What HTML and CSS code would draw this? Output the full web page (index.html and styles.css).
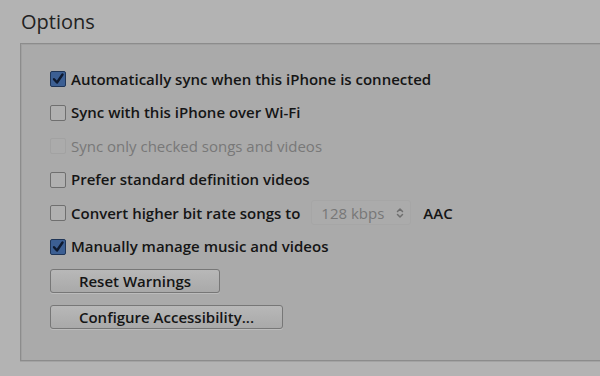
FILE: index.html
```html
<!DOCTYPE html>
<html>
<head>
<meta charset="utf-8">
<link rel="stylesheet" href="styles.css">
</head>
<body>
<div class="page">
  <h1 class="title">Options</h1>
  <div class="box">
    <div class="row">
      <span class="cb checked"><svg viewBox="0 0 14 14"><path d="M3 7.2 L6 10.5 L11.5 2.5" /></svg></span>
      <span class="label">Automatically sync when this iPhone is connected</span>
    </div>
    <div class="row">
      <span class="cb"></span>
      <span class="label">Sync with this iPhone over Wi-Fi</span>
    </div>
    <div class="row disabled">
      <span class="cb"></span>
      <span class="label">Sync only checked songs and videos</span>
    </div>
    <div class="row">
      <span class="cb"></span>
      <span class="label">Prefer standard definition videos</span>
    </div>
    <div class="row">
      <span class="cb"></span>
      <span class="label">Convert higher bit rate songs to</span>
      <span class="popup"><span class="popup-text">128 kbps</span><svg class="chev" viewBox="0 0 8 12"><path d="M1.5 4.5 L4 2 L6.5 4.5 M1.5 7.5 L4 10 L6.5 7.5" /></svg></span>
      <span class="label">AAC</span>
    </div>
    <div class="row">
      <span class="cb checked"><svg viewBox="0 0 14 14"><path d="M3 7.2 L6 10.5 L11.5 2.5" /></svg></span>
      <span class="label">Manually manage music and videos</span>
    </div>
    <div class="buttons">
      <button class="btn btn-reset">Reset Warnings</button>
      <button class="btn btn-config">Configure Accessibility...</button>
    </div>
  </div>
</div>
</body>
</html>
```
FILE: styles.css
```css
html, body {
  margin: 0;
  padding: 0;
  background: #b3b3b3;
  width: 600px;
  height: 376px;
  overflow: hidden;
}
.page {
  padding: 9px 0 0 20px;
  font-family: "Open Sans", "DejaVu Sans", sans-serif;
  color: #151515;
}
.title {
  margin: 0 0 0 1px;
  font-size: 20px;
  font-weight: 400;
  line-height: 26px;
  height: 34px;
  color: #222;
}
.box {
  background: #aaaaaa;
  border-top: 1px solid #8c8c8c;
  border-left: 1px solid #8c8c8c;
  border-bottom: 1px solid #8c8c8c;
  box-shadow: inset 1px 1px 0 #a0a0a0, 0 1px 0 #a3a3a3;
  height: 318px;
  padding: 18px 0 0 29px;
  box-sizing: border-box;
}
.row {
  display: flex;
  align-items: center;
  height: 33.5px;
  font-size: 15px;
  font-weight: 600;
}
.row.disabled {
  color: #787878;
  font-weight: 500;
}
.cb {
  width: 14px;
  height: 14px;
  border: 1px solid #6f6f6f;
  border-radius: 2px;
  background: #b0b0b0;
  margin-right: 5px;
  display: flex;
  flex: none;
  margin-top: 1px;
}
.row.disabled .cb {
  border-color: #a2a2a2;
  background: #ababab;
}
.cb.checked {
  background: #3c5f93;
  border-color: #1f3557;
}
.cb svg {
  width: 14px;
  height: 14px;
}
.cb svg path {
  fill: none;
  stroke: #0e1a30;
  stroke-width: 2.4;
  stroke-linecap: round;
  stroke-linejoin: round;
}
.popup {
  display: flex;
  align-items: center;
  margin: 0 12px 0 11px;
  width: 100px;
  height: 25px;
  box-sizing: border-box;
  padding: 0 6px 0 9px;
  background: #ababab;
  border: 1px solid #a6a6a6;
  border-radius: 3px;
  color: #777;
  font-weight: 500;
}
.popup-text {
  flex: 1;
}
.chev {
  width: 8px;
  height: 12px;
}
.chev path {
  fill: none;
  stroke: #6e6e6e;
  stroke-width: 1.5;
  stroke-linecap: round;
  stroke-linejoin: round;
}
.buttons {
  display: flex;
  flex-direction: column;
  align-items: flex-start;
  gap: 12px;
  margin-top: 6px;
}
.btn {
  font-family: "Open Sans", "DejaVu Sans", sans-serif;
  font-size: 15px;
  font-weight: 600;
  color: #151515;
  height: 24px;
  padding: 0;
  border: 1px solid #777;
  border-radius: 3px;
  background: linear-gradient(#b8b8b8, #a9a9a9);
  box-shadow: 0 1px 0 #bcbcbc;
  line-height: 20px;
}
.btn-reset { width: 170px; }
.btn-config { width: 233px; }
```
